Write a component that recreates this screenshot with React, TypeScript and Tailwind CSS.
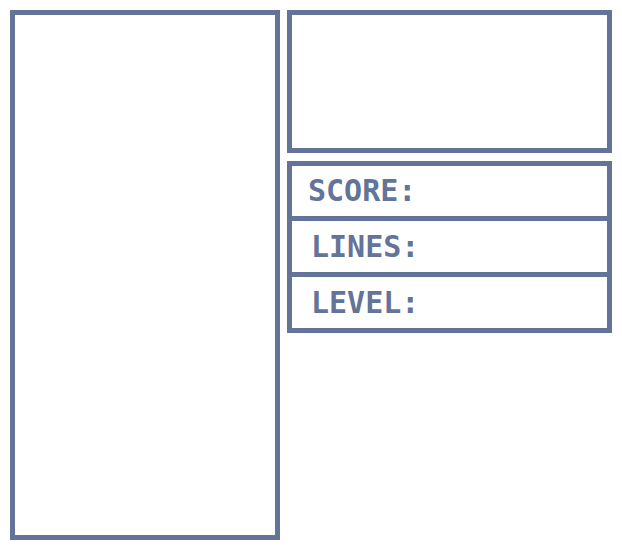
const rows = [
  { label: "SCORE:", h: "h-[55px] border-b-[5px] pl-[16px]" },
  { label: "LINES:", h: "h-[56px] border-b-[5px] pl-[19px]" },
  { label: "LEVEL:", h: "h-[51px] pl-[19px]" },
];

export default function App() {
  return (
    <div className="flex h-[550px] w-[622px] gap-[7px] bg-white p-[10px]">
      <div className="h-[530px] w-[270px] border-[5px] border-[#647499]" />
      <div className="flex w-[325px] flex-col gap-[8px]">
        <div className="h-[143px] border-[5px] border-[#647499]" />
        <div className="flex flex-col border-[5px] border-[#647499]">
          {rows.map((row) => (
            <div
              key={row.label}
              className={`flex items-center border-[#647499] ${row.h}`}
            >
              <span className="font-['DejaVu_Sans_Mono',monospace] text-[30px] font-bold leading-none text-[#647499]">
                {row.label}
              </span>
            </div>
          ))}
        </div>
      </div>
    </div>
  );
}
